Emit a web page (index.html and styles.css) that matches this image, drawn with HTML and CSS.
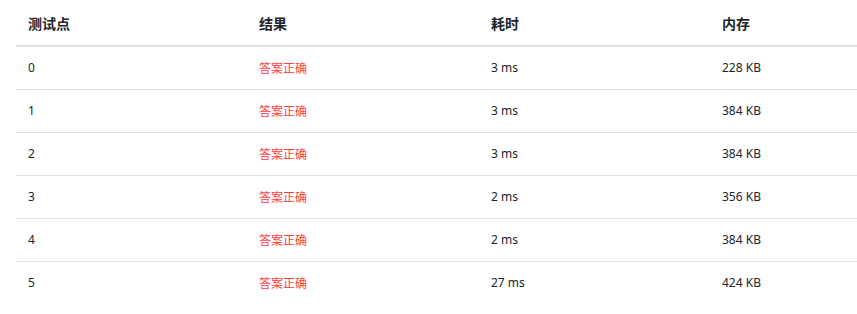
FILE: index.html
```html
<!DOCTYPE html>
<html lang="zh-CN">
<head>
<meta charset="utf-8">
<title>测试点</title>
<link rel="stylesheet" href="styles.css">
</head>
<body>
<div class="wrap">
<table class="result-table">
  <thead>
    <tr>
      <th class="c1">测试点</th>
      <th class="c2">结果</th>
      <th class="c3">耗时</th>
      <th class="c4">内存</th>
    </tr>
  </thead>
  <tbody>
    <tr><td>0</td><td class="ac">答案正确</td><td>3 ms</td><td>228 KB</td></tr>
    <tr><td>1</td><td class="ac">答案正确</td><td>3 ms</td><td>384 KB</td></tr>
    <tr><td>2</td><td class="ac">答案正确</td><td>3 ms</td><td>384 KB</td></tr>
    <tr><td>3</td><td class="ac">答案正确</td><td>2 ms</td><td>356 KB</td></tr>
    <tr><td>4</td><td class="ac">答案正确</td><td>2 ms</td><td>384 KB</td></tr>
    <tr><td>5</td><td class="ac">答案正确</td><td>27 ms</td><td>424 KB</td></tr>
  </tbody>
</table>
</div>
</body>
</html>
```
FILE: styles.css
```css
html, body {
  margin: 0;
  padding: 0;
  background: #fff;
}
.wrap {
  padding-left: 16px;
  overflow: hidden;
}
.result-table {
  width: 841px;
  border-collapse: collapse;
  table-layout: fixed;
  font-family: "Segoe UI", "Noto Sans", "Noto Sans CJK SC", sans-serif;
  font-size: 12px;
  line-height: 18px;
  color: #212529;
}
.result-table th,
.result-table td {
  box-sizing: border-box;
}
.c1 { width: 231px; }
.c2 { width: 232px; }
.c3 { width: 231px; }
.c4 { width: 147px; }
.result-table th {
  text-align: left;
  font-weight: 700;
  font-size: 14px;
  font-family: "Noto Sans CJK SC", sans-serif;
  padding: 14px 12px 13px;
  border-bottom: 2px solid #dee2e6;
}
.result-table td {
  padding: 12px;
  border-top: 1px solid #dee2e6;
  white-space: nowrap;
}
.result-table tbody tr:first-child td {
  border-top: none;
}
.result-table .ac {
  color: #ff3c3c;
  font-family: "Noto Sans CJK SC", sans-serif;
}
```
